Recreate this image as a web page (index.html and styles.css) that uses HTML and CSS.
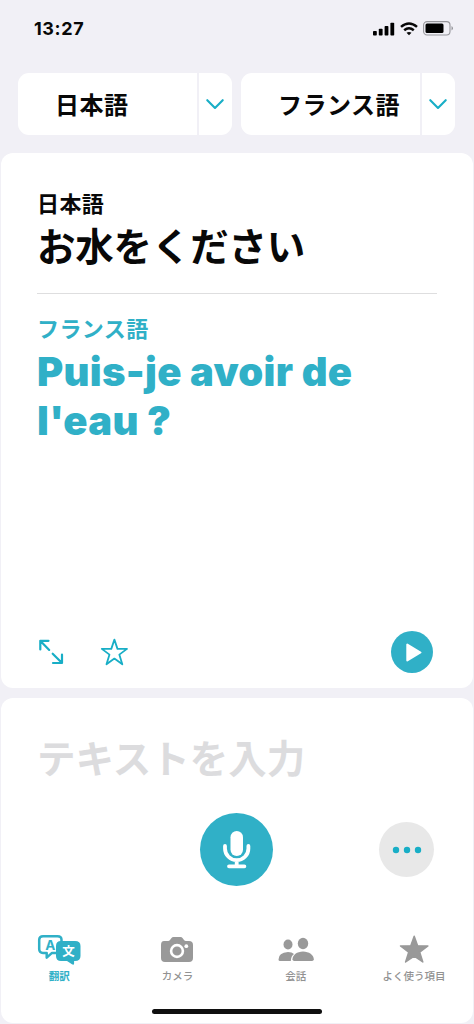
FILE: index.html
```html
<!DOCTYPE html>
<html lang="ja">
<head>
  <meta charset="UTF-8">
  <meta name="viewport" content="width=device-width, initial-scale=1.0">
  <title>翻訳</title>
  <link rel="stylesheet" href="styles.css">
</head>
<body>
  <div class="screen">

    <header class="status-bar">
      <span class="time">13:27</span>
      <div class="status-icons">
        <svg width="22" height="14" viewBox="0 0 22 14">
          <rect x="0" y="9" width="3.8" height="4.6" rx="0.8"/>
          <rect x="5.8" y="6.8" width="3.8" height="6.8" rx="0.8"/>
          <rect x="11.6" y="4" width="3.8" height="9.6" rx="0.8"/>
          <rect x="17.4" y="0.8" width="3.8" height="12.8" rx="0.8"/>
        </svg>
        <svg class="wifi" width="18" height="14" viewBox="0 0 18 14">
          <path d="M1 4.9Q9-1.9 17 4.9M4.2 8.3Q9 4.3 13.8 8.3"/>
          <path class="wifi-dot" d="M6.5 10.8Q9 9 11.5 10.8L9 13.3Z"/>
        </svg>
        <svg class="battery" width="31" height="15" viewBox="0 0 31 15">
          <rect class="shell" x="0.6" y="0.6" width="26.4" height="13.4" rx="3.5"/>
          <rect x="2.5" y="2.6" width="18" height="9.4" rx="1.5"/>
          <path class="tip" d="M28.5 5Q30 6 30 7.3T28.5 9.6Z"/>
        </svg>
      </div>
    </header>

    <div class="languages">
      <div class="picker">
        <button class="picker-name">日本語</button>
        <button class="picker-arrow">
          <svg width="18" height="11" viewBox="0 0 18 11"><path d="M1.3 1.2L9 9L16.7 1.2"/></svg>
        </button>
      </div>
      <div class="picker">
        <button class="picker-name">フランス語</button>
        <button class="picker-arrow">
          <svg width="18" height="11" viewBox="0 0 18 11"><path d="M1.3 1.2L9 9L16.7 1.2"/></svg>
        </button>
      </div>
    </div>

    <main class="card result">
      <div class="source">
        <div class="label">日本語</div>
        <div class="source-text">お水をください</div>
      </div>
      <div class="target">
        <div class="label">フランス語</div>
        <div class="target-text" lang="fr">Puis-je avoir de l'eau ?</div>
      </div>
      <div class="actions">
        <svg class="expand" width="26" height="26" viewBox="0 0 26 26">
          <path d="M10.5 1.8H2.3V10.5M2.7 2.2L11.2 10.9M14.7 14.7L23.5 23.5M15 24H24V15.5"/>
        </svg>
        <svg class="star" width="28" height="28" viewBox="0 0 28 28">
          <path d="M14.4 1.6L17.5 10.9H27L19.3 16.6L22.3 26.3L14.4 20.6L6.5 26.3L9.5 16.6L1.8 10.9H11.3Z"/>
        </svg>
        <button class="play">
          <svg width="16" height="19" viewBox="0 0 16 19"><path d="M1.3 1.6V17.4L14.5 9.5Z"/></svg>
        </button>
      </div>
    </main>

    <section class="card input-card">
      <div class="placeholder">テキストを入力</div>
      <div class="controls">
        <button class="mic">
          <svg width="28" height="38" viewBox="0 0 28 38">
            <rect x="7.5" y="0" width="12.5" height="25" rx="6.25"/>
            <path d="M2 15V17.5A11.7 11.7 0 0 0 25.4 17.5V15M13.7 29.5V34.5M6 35.3H21.4"/>
          </svg>
        </button>
        <button class="more">
          <svg width="30" height="8" viewBox="0 0 30 8">
            <circle cx="4" cy="4" r="3.2"/>
            <circle cx="15" cy="4" r="3.2"/>
            <circle cx="26" cy="4" r="3.2"/>
          </svg>
        </button>
      </div>

      <nav class="tabs">
        <a class="tab active">
          <svg width="44" height="32" viewBox="0 0 44 32">
            <path class="bubble" d="M6 2.2H20.5Q24.5 2.2 24.5 5.7V15Q24.5 18.9 20.5 18.9H15L9.7 23.6V18.9H6Q2.2 18.9 2.2 15V5.7Q2.2 2.2 6 2.2Z"/>
            <path class="bubble-front" d="M24 7H38Q43.5 7 43.5 12V22Q43.5 27 38 27H37.1V29.5Q36.9 31.4 35 30.3L30 27H24Q19 27 19 22V12Q19 7 24 7Z"/>
            <text class="letter-a" x="13.2" y="15.6">A</text>
            <text class="letter-b" x="31.4" y="21.7">文</text>
          </svg>
          <span>翻訳</span>
        </a>
        <a class="tab">
          <svg width="34" height="32" viewBox="0 0 34 32">
            <path d="M4 7H8.2Q9.2 7 10 6L11.3 4.2Q12.2 3 13.5 3H20.5Q21.8 3 22.7 4.2L24 6Q24.8 7 25.8 7H29Q33 7 33 11V24Q33 28 29 28H5Q1 28 1 24V11Q1 7 4 7Z"/>
            <circle class="lens" cx="17" cy="17" r="5.9"/>
            <circle class="hole" cx="26.3" cy="12.2" r="1.9"/>
          </svg>
          <span>カメラ</span>
        </a>
        <a class="tab">
          <svg width="36" height="32" viewBox="0 0 36 32">
            <ellipse cx="10" cy="10.5" rx="4.5" ry="5"/>
            <path d="M.5 25.5Q.5 18.5 10 18Q14 18 16 20Q13 22 12.8 27H2Q.5 27 .5 25.5Z"/>
            <ellipse cx="25" cy="9.5" rx="5.2" ry="5.8"/>
            <path d="M14.5 25.3C14.5 21 19 17.4 25 17.4S35.8 21 35.8 25.3Q35.8 27 34 27H16.2Q14.5 27 14.5 25.3Z"/>
          </svg>
          <span>会話</span>
        </a>
        <a class="tab">
          <svg width="32" height="32" viewBox="0 0 32 32">
            <path class="solid-star" d="M16.2 2.2L19.6 11.7L29.9 11.9L21.7 18.2L24.8 28L16.2 22.2L7.6 28L10.7 18.2L2.5 11.9L12.8 11.7Z"/>
          </svg>
          <span>よく使う項目</span>
        </a>
      </nav>
      <div class="home-bar"></div>
    </section>

  </div>
</body>
</html>
```
FILE: styles.css
```css
* {
  box-sizing: border-box;
}

body {
  margin: 0;
  background: #f1f0f6;
  color: #080808;
  font-family: Inter, "Noto Sans CJK JP", sans-serif;
}

button {
  border: none;
  padding: 0;
  font: inherit;
  color: inherit;
  cursor: pointer;
}

svg {
  display: block;
}

.screen {
  height: 1024px;
  padding: 0 1px 1px;
  display: flex;
  flex-direction: column;
  overflow: hidden;
}

.status-bar {
  height: 73px;
  padding: 17px 19px 0 33px;
  display: flex;
  justify-content: space-between;
  align-items: flex-start;
}

.time {
  font-size: 18px;
  line-height: 23px;
  font-weight: 700;
  letter-spacing: 0.6px;
}

.status-icons {
  display: flex;
  align-items: center;
  gap: 5px;
  padding-top: 4px;
}

.wifi path {
  fill: none;
  stroke: #080808;
  stroke-width: 2.5;
}

.wifi .wifi-dot {
  fill: #080808;
  stroke: none;
}

.battery .shell {
  fill: none;
  stroke: #96969b;
  stroke-width: 1.1;
}

.battery .tip {
  fill: #96969b;
}

.languages {
  display: flex;
  gap: 9px;
  padding: 0 17px;
  height: 62px;
  margin-bottom: 18px;
}

.picker {
  flex: 0 0 214px;
  display: flex;
  gap: 2px;
}

.picker-name {
  flex: 1;
  background: #fff;
  border-radius: 11px 0 0 11px;
  font-size: 24px;
  font-weight: 700;
  letter-spacing: 0.5px;
  padding: 0 0 1px 37px;
  text-align: left;
}

.picker-arrow {
  width: 33px;
  background: #fff;
  border-radius: 0 11px 11px 0;
  display: grid;
  place-items: center;
  padding-right: 1px;
}

.picker-arrow path {
  fill: none;
  stroke: #18aec6;
  stroke-width: 2.1;
  stroke-linecap: round;
  stroke-linejoin: round;
}

.card {
  background: #fff;
  border-radius: 12px;
}

.result {
  height: 535px;
  margin-bottom: 10px;
  padding: 36px 36px 15px;
  display: flex;
  flex-direction: column;
}

.label {
  font-size: 22px;
  line-height: 30px;
  font-weight: 700;
  letter-spacing: 0.4px;
}

.source {
  height: 105px;
  border-bottom: 1px solid #dededf;
}

.source-text {
  font-size: 38.5px;
  line-height: 56px;
  font-weight: 700;
  letter-spacing: -0.2px;
}

.target {
  padding-top: 20px;
  color: #30b0c7;
}

.target-text {
  margin-top: 3px;
  font-size: 40px;
  line-height: 49px;
  font-weight: 900;
  letter-spacing: 0.3px;
}

.actions {
  margin-top: auto;
  padding: 0 4px 0 1px;
  display: flex;
  align-items: center;
}

.expand,
.star {
  fill: none;
  stroke: #18aec6;
  stroke-width: 2.2;
  stroke-linecap: round;
  stroke-linejoin: round;
}

.star {
  stroke-width: 1.8;
  margin-left: 36px;
}

.play {
  width: 42px;
  height: 42px;
  margin-left: auto;
  border-radius: 50%;
  background: #30b0c7;
  display: grid;
  place-items: center;
}

.play path {
  fill: #fff;
  stroke: #fff;
  stroke-width: 2;
  stroke-linejoin: round;
}

.play svg {
  margin-left: 3px;
}

.input-card {
  flex: 1;
  display: flex;
  flex-direction: column;
}

.placeholder {
  padding: 33px 36px 0;
  font-size: 38.5px;
  line-height: 56px;
  font-weight: 700;
  color: #dcdcde;
}

/* the mic stays centred, the menu sits in the right column */
.controls {
  display: grid;
  grid-template-columns: 1fr 74px 1fr;
  align-items: center;
  padding: 26px 38px 0;
}

.mic {
  grid-column: 2;
  width: 73px;
  height: 73px;
  border-radius: 50%;
  background: #30b0c7;
  display: grid;
  place-items: center;
}

.mic rect {
  fill: #fff;
}

.mic path {
  fill: none;
  stroke: #fff;
  stroke-width: 3.8;
  stroke-linecap: round;
}

.more {
  justify-self: end;
  margin-right: 1px;
  width: 55px;
  height: 55px;
  border-radius: 50%;
  background: #e8e8e8;
  display: grid;
  place-items: center;
}

.more circle {
  fill: #18aec6;
}

.tabs {
  display: flex;
  margin-left: -1px;
  padding-top: 48px;
}

.tab {
  flex: 0 0 118.3px;
  display: flex;
  flex-direction: column;
  align-items: center;
  font-size: 10.5px;
  line-height: 16px;
  font-weight: 500;
  color: #929292;
}

.tab svg {
  fill: #999;
}

.tab span {
  margin-top: 3px;
}

.tab.active {
  color: #30b0c7;
  font-weight: 700;
}

.tab .bubble {
  fill: #fff;
  stroke: #30b0c7;
  stroke-width: 2.5;
  stroke-linejoin: round;
}

.tab .bubble-front {
  fill: #30b0c7;
}

.letter-a,
.letter-b {
  text-anchor: middle;
  font-weight: 700;
  font-size: 13.5px;
  fill: #30b0c7;
}

.letter-b {
  font-size: 12.5px;
  fill: #fff;
}

.tab .lens {
  fill: none;
  stroke: #fff;
  stroke-width: 2.6;
}

.tab .hole {
  fill: #fff;
}

.solid-star {
  stroke: #999;
  stroke-width: 1.5;
  stroke-linejoin: round;
}

.home-bar {
  width: 170px;
  height: 5px;
  margin: auto 152px 9px 151px;
  border-radius: 3px;
  background: #101010;
}
```
